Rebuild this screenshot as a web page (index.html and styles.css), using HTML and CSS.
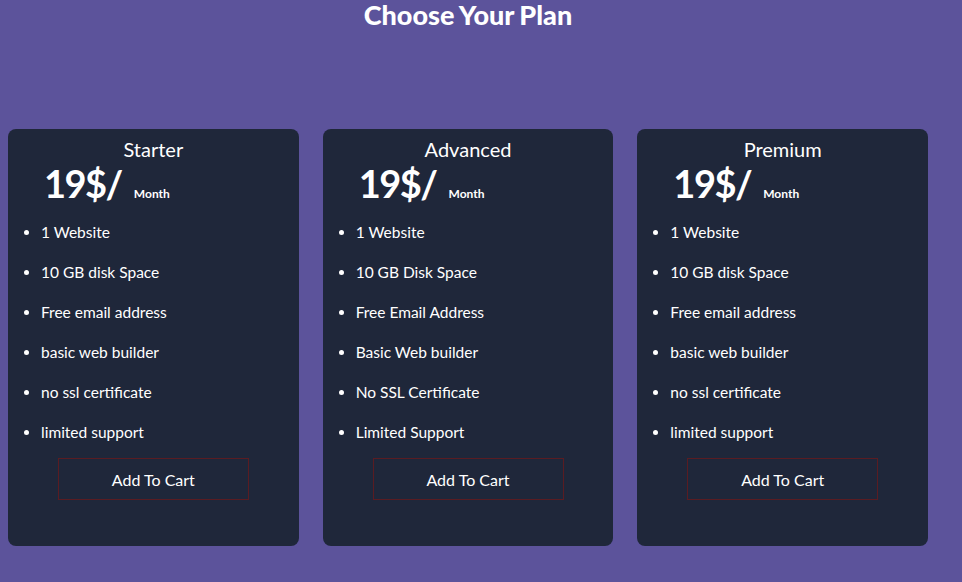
FILE: index.html
```html
<!DOCTYPE html>
<html>
<head>
<meta charset="utf-8">
<link rel="stylesheet" href="styles.css">
</head>
<body>
<div class="page">
  <h1 class="heading">Choose Your Plan</h1>
  <div class="plans">
    <div class="card">
      <h2 class="name">Starter</h2>
      <div class="price"><span class="amount">19$/</span><span class="per">Month</span></div>
      <ul class="features">
        <li>1 Website</li>
        <li>10 GB disk Space</li>
        <li>Free email address</li>
        <li>basic web builder</li>
        <li>no ssl certificate</li>
        <li>limited support</li>
      </ul>
      <button class="cart">Add To Cart</button>
    </div>
    <div class="card">
      <h2 class="name">Advanced</h2>
      <div class="price"><span class="amount">19$/</span><span class="per">Month</span></div>
      <ul class="features">
        <li>1 Website</li>
        <li>10 GB Disk Space</li>
        <li>Free Email Address</li>
        <li>Basic Web builder</li>
        <li>No SSL Certificate</li>
        <li>Limited Support</li>
      </ul>
      <button class="cart">Add To Cart</button>
    </div>
    <div class="card">
      <h2 class="name">Premium</h2>
      <div class="price"><span class="amount">19$/</span><span class="per">Month</span></div>
      <ul class="features">
        <li>1 Website</li>
        <li>10 GB disk Space</li>
        <li>Free email address</li>
        <li>basic web builder</li>
        <li>no ssl certificate</li>
        <li>limited support</li>
      </ul>
      <button class="cart">Add To Cart</button>
    </div>
  </div>
</div>
</body>
</html>
```
FILE: styles.css
```css
body {
  margin: 0;
  padding: 0 8px;
  background: #5c539b;
  font-family: Lato, "Open Sans", sans-serif;
  color: #ffffff;
}
.page {
  width: 920px;
}
.heading {
  margin: 0;
  text-align: center;
  font-size: 27px;
  line-height: 30px;
  font-weight: 900;
  word-spacing: -1px;
}
.plans {
  display: flex;
  gap: 24px;
  margin-top: 99px;
}
.card {
  flex: 1;
  height: 417px;
  box-sizing: border-box;
  background: #1f273a;
  border-radius: 8px;
  padding-top: 9px;
  display: flex;
  flex-direction: column;
}
.name {
  margin: 0;
  text-align: center;
  font-size: 20px;
  line-height: 22px;
  font-weight: 400;
}
.price {
  display: flex;
  align-items: baseline;
  padding-left: 36px;
  margin-top: 1px;
}
.amount {
  font-size: 38px;
  line-height: 44px;
  font-weight: 700;
  letter-spacing: -1.5px;
}
.per {
  font-size: 12px;
  font-weight: 700;
  margin-left: 12px;
}
.features {
  margin: 17px 0 0;
  padding-left: 33px;
  font-size: 15.5px;
  line-height: 20px;
}
.features li {
  margin-bottom: 20px;
}
.cart {
  align-self: center;
  margin-top: -4px;
  width: 191px;
  height: 42px;
  background: transparent;
  border: 1px solid #5a1c22;
  color: #ffffff;
  font-family: Lato, "Open Sans", sans-serif;
  font-size: 16px;
  cursor: pointer;
}
```
